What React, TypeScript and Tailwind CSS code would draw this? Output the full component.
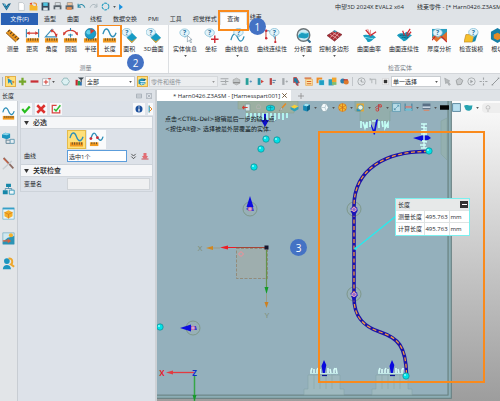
import React, { useState } from 'react';

type IconProps = { className?: string; children?: React.ReactNode };

const Icon = ({ className = 'size-[15px]', children }: IconProps) => (
  <svg viewBox="0 0 16 16" fill="none" className={`block shrink-0 ${className}`} aria-hidden="true">
    {children}
  </svg>
);

const Ruler = () => (
  <g>
    <rect x="1" y="11" width="14" height="4.5" fill="#f39a1e" />
    <path d="M3.5 11v2.5M6 11v2.5M8.500 11v2.5M11 11v2.5M13.500 11v2.5" stroke="#5a4a30" strokeWidth="1" />
  </g>
);

const Bubble = ({ x = 6, y = 4.5 }: { x?: number; y?: number }) => (
  <g>
    <path d={`M${x} ${y + 3}l0 3l3 -3z`} fill="#8cc6dc" />
    <ellipse cx={x} cy={y} rx="5" ry="4" fill="#e2f3fa" stroke="#7fbcd4" strokeWidth=".8" />
    <text x={x} y={y + 2.5} fontSize="7" fontWeight="700" textAnchor="middle" fill="#1c6f9c" fontFamily="Open Sans">?</text>
  </g>
);

const Caret = ({ className = 'text-[#555]' }: { className?: string }) => (
  <svg viewBox="0 0 4 3" className={`block h-[2px] w-[3px] shrink-0 ${className}`} aria-hidden="true">
    <path d="M0 0h4L2 3z" fill="currentColor" />
  </svg>
);

const art: Record<string, React.ReactNode> = {
  measure: (
    <g>
      <path d="M1 5l4-3.500L15.500 11l-4 4z" fill="#e8951f" />
      <path d="M1 5l10.500 10" stroke="#8a5a20" />
      <path d="M5 2l-2 2M7.500 4.200l-2 2M10 6.400l-2 2M12.400 8.600l-2 2M14.800 10.800l-2 2" stroke="#5a4020" strokeWidth="1.200" />
    </g>
  ),
  distance: (
    <g>
      <Ruler />
      <path d="M1.500 1v9M14.500 1v9" stroke="#3b8fb8" strokeWidth="1.200" />
      <path d="M2 5.500h12" stroke="#d33b33" strokeWidth="1.300" />
      <path d="M2 5.500l3-2v4zM14 5.500l-3-2v4z" fill="#d33b33" />
    </g>
  ),
  angle: (
    <g>
      <Ruler />
      <path d="M9 1L1.500 9.500H14" stroke="#3b8fb8" strokeWidth="1.200" />
      <path d="M8 2.500c3 1 4.500 3.500 5 6.500" stroke="#d33b33" strokeWidth="1.300" />
      <path d="M6.500 2l4-.5-2 3.500zM13.500 10l-2-3.500 3-.5z" fill="#d33b33" />
    </g>
  ),
  arc: (
    <g>
      <Ruler />
      <path d="M1 7C3 1 13 1 15 7" stroke="#d33b33" strokeWidth="1.300" />
      <path d="M0 8l.5-4 2.500 2zM16 8l-.5-4-2.500 2z" fill="#d33b33" />
      <path d="M8 0v3M8 6v4M5.500 7.500h5" stroke="#2f89b5" strokeWidth="1.200" />
    </g>
  ),
  radius: (
    <g>
      <Ruler />
      <circle cx="8" cy="6" r="5.700" fill="#1b9dc9" stroke="#12668a" strokeWidth=".6" />
      <circle cx="6" cy="4.500" r="2.500" fill="#63cfe8" />
      <path d="M8 6V.8L12.500 3z" fill="#d33b33" />
    </g>
  ),
  length: (
    <g>
      <Ruler />
      <path d="M1 6.500C3-.5 6-.5 8 5s5 6 7 0" stroke="#2f8fb8" strokeWidth="1.400" />
    </g>
  ),
  area: (
    <g>
      <path d="M10.500 5L16 10.500 10.500 16 5 10.500z" fill="#159bc5" />
      <path d="M5 10.500l5.500 3.500L16 10.500 10.500 16z" fill="#e3a22d" />
      <Bubble x={5} y={4.5} />
    </g>
  ),
  entity: (
    <g>
      <Bubble x={7} y={5} />
      <path d="M10 8v7l2-2 1.500 3 1-.5-1.500-3h2z" fill="#fff" stroke="#8195a5" strokeWidth=".7" />
    </g>
  ),
  coord: (
    <g>
      <Bubble x={6} y={5} />
      <path d="M11.500 8v8M7.500 12h8" stroke="#cf2832" strokeWidth="1.500" />
    </g>
  ),
  curveInfo: (
    <g>
      <path d="M1 13C3 5 6 5 8 10s5 6 7-1" stroke="#2f8fb8" strokeWidth="1.400" />
      <Bubble x={9} y={4.5} />
    </g>
  ),
  continuity: (
    <g>
      <path d="M1 3v8M11 7v8" stroke="#d3574f" strokeWidth="1.200" />
      <path d="M1 4c3-3 6 0 10 8" stroke="#3b8fb8" />
      <circle cx="1.300" cy="3" r="1.300" fill="#cf2832" />
      <circle cx="1.300" cy="11" r="1.300" fill="#cf2832" />
      <circle cx="11" cy="15" r="1.200" fill="#cf2832" />
      <Bubble x={10} y={4.5} />
    </g>
  ),
  analyse: (
    <g>
      <circle cx="8" cy="7.500" r="6.700" fill="#cdeaf3" stroke="#6c7478" strokeWidth="1.500" />
      <path d="M2.500 8c3-5 6-1 11-3v4c-4 4-7 1-11 1z" fill="#1b9dbf" />
      <path d="M4 6c3-3 5 1 8-1" stroke="#79d9e8" />
      <path d="M12.500 12.500l3 3" stroke="#2f6f94" strokeWidth="2.400" />
    </g>
  ),
  polygon: (
    <g>
      <path d="M0 8l8-5 8 4-8 7z" fill="#a82c34" />
      <path d="M3 6.500l8 5M5.500 4.500l8 5M6 12.500L13 5M3 10.500l7-6" stroke="#f0b1b1" strokeWidth=".8" />
      <path d="M0 8l8-5 8 4-8 7z" stroke="#6c1c24" strokeWidth=".6" />
      <path d="M7 3l3 1" stroke="#2b9fc1" strokeWidth="1.500" />
    </g>
  ),
  curvature: (
    <g>
      <path d="M1 8c3-2 5 1 9-2l5 4c-4 1-4 5-9 5-1-3-3-4-5-7z" fill="#1b9dbf" />
      <path d="M3 10c4 0 5 2 9 1" stroke="#7edaea" />
      <path d="M4 2l5 6 6-4" stroke="#cf2832" strokeWidth="1.500" />
      <path d="M6 1l3 7V2" stroke="#e46c68" strokeWidth=".8" />
    </g>
  ),
  surfaceCont: (
    <g>
      <path d="M0 8c4-5 7 0 10-4l6 4c-4 2-5 6-9 6-2-2-4-3-7-6z" fill="#1b9dbf" />
      <path d="M3 8c3-2 6 2 9 0M5 10c3-1 4 2 7 0" stroke="#0d5f7d" />
      <path d="M6 3l2 5M14 1l-4 6M11 9l4-5" stroke="#cf2832" strokeWidth="1.300" />
    </g>
  ),
  thickness: (
    <g>
      <rect x="0" y="1" width="16" height="10" fill="#2b9fc1" />
      <path d="M0 10l5-5 5 4 6-5v10l-6-4-5 5z" fill="#e0702c" />
      <path d="M0 13l5-6M10 9l6 6" stroke="#c12b2b" strokeWidth="1.400" />
      <Bubble x={6} y={5} />
    </g>
  ),
  draft: (
    <g>
      <path d="M2 7h9l-2 8H0z" fill="#f5c02c" stroke="#b87b14" strokeWidth=".6" />
      <path d="M11 7l4-2-3 9-3 1z" fill="#1587ae" />
      <Bubble x={10} y={4.5} />
    </g>
  ),
  undercut: (
    <g>
      <path d="M8 0l7 4v8l-7 4-7-4V4z" fill="#167fa6" />
      <path d="M8 5l4 2v4l-4 2-4-2V7z" fill="#e58b25" />
    </g>
  ),
  logo: (
    <g>
      <path d="M0 2l8 13 8-13-5 1-3 4-3-4z" fill="#1d6288" />
      <circle cx="5" cy="5" r="2" fill="#64b9d8" />
      <path d="M6 8l2 4 4-7" stroke="#35a1c8" strokeWidth="1.500" />
    </g>
  ),
  page: <path d="M3 1h7l3 3v11H3z" fill="#fff" stroke="#a8b0b8" />,
  open: (
    <g>
      <path d="M1 5h6l1 2h7v8H1z" fill="#f6b72c" />
      <path d="M8 2c4-1 6 1 5 5" stroke="#ee8c22" strokeWidth="2" />
      <path d="M1 2l5-1-2 5z" fill="#e34c26" />
    </g>
  ),
  save: (
    <g>
      <path d="M1 1h14v14H1z" fill="#35485a" />
      <path d="M4 1h8v6H4z" fill="#4fc3de" />
      <path d="M4 10h8v5H4z" fill="#dce5ea" />
    </g>
  ),
  print: (
    <g>
      <path d="M4 1h9v5H4z" fill="#d9e1e6" stroke="#777" />
      <path d="M1 6h14v7H1z" fill="#59636b" />
      <path d="M4 9h8v5H4z" fill="#d8dde0" />
    </g>
  ),
  printAll: (
    <g>
      <path d="M4 1h9v5H4z" fill="#f2c8a0" stroke="#777" />
      <path d="M1 6h14v7H1z" fill="#59636b" />
      <path d="M3 9h9v5H3z" fill="#e08a4d" />
    </g>
  ),
  undo: <path d="M2 8c4-6 10-4 12 2M2 3v6h5" stroke="#2d8daa" strokeWidth="2" />,
  redo: <path d="M14 8C10 2 4 4 2 10M14 3v6H9" stroke="#a9b6bd" strokeWidth="1.700" />,
  sync: <circle cx="8" cy="8" r="6" stroke="#2d9fc1" strokeWidth="2" strokeDasharray="5 1.300" />,
  pick: (
    <g>
      <path d="M3 2l1 10 3-3 3 5 2-1-3-5h4z" fill="#1f8fc4" />
      <path d="M11 9h4M13 7v4M2 1h4" stroke="#e07b1e" strokeWidth="1.500" />
    </g>
  ),
  plus: <path d="M8 1.500v13M1.500 8h13" stroke="#75a72b" strokeWidth="4" />,
  minus: <path d="M1 8h14" stroke="#c92f35" strokeWidth="4" />,
  boxPlus: (
    <g>
      <path d="M1 3h12v12H1z" fill="#fff" stroke="#8c9aa4" />
      <path d="M7 5v8M3 9h8M11 3h5" stroke="#d33b33" strokeWidth="1.800" />
    </g>
  ),
  hexagon: <path d="M5 2h6l4 6-4 6H5L1 8z" fill="#dcf0f2" stroke="#7bacae" strokeWidth="1.300" />,
  filter: (
    <g>
      <path d="M1 5h4v10H1z" fill="#c8282e" />
      <path d="M5 7h4v8H5z" fill="#2c9c52" />
      <path d="M9 9h3v6H9z" fill="#2468a8" />
      <path d="M5 1h11l-4 4v4h-2V5z" fill="#38444c" />
    </g>
  ),
  swap: (
    <g>
      <path d="M1 5l6-3 6 3v7l-6 3-6-3z" fill="#1c91b9" />
      <path d="M4 8h10l-3-5M12 11H5l3 4" stroke="#fff" strokeWidth="1.500" />
      <path d="M10 2l5 3-5 2z" fill="#24597c" />
    </g>
  ),
  greyLines: <path d="M1 3h14M1 8h14M3 13h9M10 5v6" stroke="#a4a8aa" strokeWidth="1.800" />,
  greyCube: (
    <g>
      <path d="M2 5l6-3 6 3v6l-6 3-6-3z" fill="#c3c7c9" stroke="#999" />
      <path d="M2 10h12" stroke="#888" strokeWidth="2" />
    </g>
  ),
  barTeal: (
    <g>
      <path d="M3 2h5v12H3z" fill="#28a09a" />
      <path d="M10 8h4M12 6v4" stroke="#5390bb" strokeWidth="1.500" />
    </g>
  ),
  barRed: (
    <g>
      <path d="M3 2h5v12H3z" fill="#2c97ab" />
      <path d="M9 5l5 3-5 3z" fill="#d3403a" />
    </g>
  ),
  barRed2: (
    <g>
      <path d="M3 2h4v12H3z" fill="#b94545" />
      <path d="M8 6h6M8 10h4" stroke="#4f7ba0" strokeWidth="1.700" />
    </g>
  ),
  barGrey: (
    <g>
      <path d="M4 2h4v12H4z" fill="#a4a9ac" />
      <path d="M10 8h4M12 6v4" stroke="#a4a9ac" strokeWidth="1.500" />
    </g>
  ),
  cursor: <path d="M3 1h5l5 9-3 1 1 4-3-1-2-5-3 1z" fill="#1b7ea6" stroke="#cf3b37" strokeWidth="1.500" />,
  list: (
    <g>
      <path d="M3 4h12v11H3z" fill="#fbe5a6" stroke="#ea9a34" />
      <path d="M1 2h12M5 8h8M5 12h8" stroke="#d8672d" strokeWidth="2" />
    </g>
  ),
  layers: (
    <g>
      <path d="M1 1h10v10H1z" fill="#ee8d27" />
      <path d="M5 5h10v10H5z" fill="#1f9fc4" stroke="#fff" />
    </g>
  ),
  cubes: (
    <g>
      <path d="M1 4h9v11H1z" fill="#2a9dbb" />
      <path d="M7 1h8v8H7z" fill="#f0a62e" />
      <path d="M7 9h8v5H7z" fill="#83bd6d" />
    </g>
  ),
  balls: (
    <g>
      <circle cx="5" cy="7" r="4.500" fill="#2a7fae" />
      <circle cx="11" cy="9" r="4.500" fill="#de7a2c" />
      <path d="M6 5h8" stroke="#c23333" strokeWidth="2" />
    </g>
  ),
  clock: (
    <g>
      <circle cx="8" cy="8" r="6.500" stroke="#9b9fa2" strokeWidth="1.300" />
      <path d="M8 4v5h4M8 8L5 6" stroke="#9b9fa2" strokeWidth="1.300" />
    </g>
  ),
  hook: <path d="M2 4h10v9M5 4v7M2 2v4" stroke="#a9adb0" strokeWidth="1.500" />,
  square: (
    <g>
      <path d="M1 1h14v14H1z" fill="#fff" stroke="#bbb" />
      <path d="M4 4h8v8H4z" fill="#333" />
    </g>
  ),
  greyCursor: <path d="M3 2l2 10 2-3 4 6 2-2-4-5 3-1z" fill="#b5b9bb" stroke="#96999b" />,
  greyShape: <path d="M2 6l6-4 6 4-3 7-7 1z" fill="#c8cbcd" stroke="#989b9d" strokeWidth="1.500" />,
  play: (
    <g>
      <circle cx="8" cy="8" r="6.500" stroke="#9b9fa2" strokeWidth="1.300" />
      <path d="M6 5l5 3-5 3z" fill="#9b9fa2" />
    </g>
  ),
  dots: <path d="M1 8h4M8 1v4M8 11v4M11 8h4M7 8h2" stroke="#a0a4a6" strokeWidth="2" />,
  line: <path d="M2 14L14 2M1 14h3M12 2h3" stroke="#85898c" strokeWidth="1.500" />,
  wireTree: (
    <g>
      <path d="M0 3l4-2 6 1v5l-4 2-6-2z" fill="#1c95bf" />
      <path d="M0 3l4-2 6 1-4 2z" fill="#8ad6ea" />
      <path d="M5 9v5h5M5 10h5" stroke="#688797" strokeWidth="1.200" />
      <path d="M10 9h5v5h-5z" fill="#e6eff3" stroke="#4f8ca8" />
    </g>
  ),
  tools: (
    <g>
      <path d="M2 1l12 13" stroke="#8b6b62" strokeWidth="2.200" />
      <path d="M1 15L12 5" stroke="#c6cdd2" strokeWidth="1.800" />
      <path d="M2 2l6 6" stroke="#d3603f" strokeWidth="1.300" />
    </g>
  ),
  orgTree: (
    <g>
      <path d="M5 2h6v4H5zM1 10h6v5H1z" fill="#1587a9" />
      <path d="M9 10h6v5H9z" fill="#eef7fa" stroke="#1f8fb3" />
      <path d="M8 6v2M4 10V8h8v2" stroke="#4f8ca8" />
    </g>
  ),
  box: (
    <g>
      <path d="M1 1h14v14H1z" fill="#eaf5f9" stroke="#7cb8cf" />
      <path d="M1 1h14v2H1z" fill="#36a0c8" />
      <path d="M8 4l5 2.500v5L8 14l-5-2.500v-5z" fill="#f4b02b" />
      <path d="M3 6.500L8 9l5-2.500M8 9v5" stroke="#d77e1b" />
    </g>
  ),
  scenery: (
    <g>
      <path d="M1 1h14v14H1z" fill="#cfe8f0" stroke="#83b4c6" />
      <path d="M1 12l6-5 8-2v10H1z" fill="#2b94b5" />
      <circle cx="11" cy="4" r="2.500" fill="#f4b02b" />
      <path d="M1 11h8M7 9l3 2-3 2" stroke="#e0603a" strokeWidth="1.500" />
    </g>
  ),
  people: (
    <g>
      <circle cx="6" cy="5" r="3.500" fill="#1c95bf" />
      <path d="M1 15c0-7 10-7 10 0z" fill="#1c95bf" />
      <path d="M8 2c6-1 5 6 3 7l4 3" stroke="#eea72c" strokeWidth="2.400" />
    </g>
  ),
  exit: (
    <g>
      <path d="M6 2h8v12H6z" fill="#dae8ea" stroke="#6b8d96" />
      <path d="M1 8h9M4 5L1 8l3 3" stroke="#d33b33" strokeWidth="2" />
    </g>
  ),
  gem: (
    <g>
      <ellipse cx="8" cy="9" rx="7.500" ry="5" fill="#10d3dc" stroke="#13858f" strokeWidth="1.200" />
      <path d="M4 8h8M8 5v8" stroke="#13858f" />
    </g>
  ),
  brush: (
    <g>
      <path d="M14 1L7 9" stroke="#e58b25" strokeWidth="3" />
      <path d="M7 8l-5 6 6-3z" fill="#fff" stroke="#777" />
    </g>
  ),
  slab: (
    <g>
      <path d="M1 7l7-4 7 3-7 4z" fill="#f6cf3a" />
      <path d="M1 7l7 3v5l-7-4zM15 6v5l-7 4v-5z" fill="#2fa0b9" />
    </g>
  ),
  cube: (
    <g>
      <path d="M2 4l5-3 7 2v8l-5 4-7-2z" fill="#1589b5" />
      <path d="M2 4l5-3 7 2-5 3z" fill="#a7e4f1" />
      <path d="M9 6l5-3v8l-5 4z" fill="#0d5f84" />
    </g>
  ),
  ghostCube: (
    <g>
      <path d="M5 1h6l4 7-4 7H5L1 8z" fill="#f4fafc" stroke="#7d98a3" />
      <path d="M1 8h8l2-7M9 8l2 7" stroke="#9db4bd" />
    </g>
  ),
  globe: (
    <g>
      <circle cx="8" cy="8" r="7" fill="#f6bd31" stroke="#cf6c1c" />
      <path d="M8 1v14M2 4l12 8M14 4L2 12" stroke="#cf6c1c" strokeWidth="1.400" />
    </g>
  ),
  magnify: (
    <g>
      <path d="M1 1h13v14H1z" fill="#e9a92f" />
      <path d="M1 10h7v5H1z" fill="#2f93b8" />
      <circle cx="8" cy="8" r="4.500" fill="#f3f3dc" stroke="#2f93b8" strokeWidth="1.200" />
    </g>
  ),
  rotate: (
    <g>
      <path d="M2 9c3-5 9-5 12-2M8 2v12" stroke="#a84c55" strokeWidth="1.700" />
      <circle cx="6" cy="12" r="2.500" stroke="#d33b33" strokeWidth="1.500" />
      <circle cx="11" cy="5" r="2.500" stroke="#d33b33" strokeWidth="1.500" />
    </g>
  ),
  fit: <path d="M1 1h14v14H1zM4 12l8-8M9 4h3v3M4 9v3h3" fill="#b8dce8" stroke="#3f87a4" />,
  section: (
    <g>
      <path d="M2 1v13M14 1v13" stroke="#2c7797" strokeWidth="1.500" />
      <path d="M2 7h12" stroke="#e66d61" strokeWidth="2" />
      <path d="M2 12h12" stroke="#67c0d6" strokeWidth="3" />
    </g>
  ),
  monitor: (
    <g>
      <path d="M1 1h14v10H1z" fill="#596f85" />
      <path d="M1 6h14v3H1z" fill="#c9d5e2" />
      <path d="M3 12h10v2H3z" fill="#d98a6a" />
    </g>
  ),
  blackBar: <path d="M0 4h16v8H0z" fill="#060606" />,
  pane: <path d="M1 1h14v14H1z" fill="#b7dff0" stroke="#4b7c94" strokeWidth="1.500" />,
  surface: <path d="M0 5c5-4 8 1 15-1l-1 6c-3 5-8 4-11 2z" fill="#26a3b0" />,
  bulb: <path d="M5 10c-4-9 10-9 6 0zM6 14h4" stroke="#b4b4b4" strokeWidth="1.500" />,
};

const quickAccess = ['logo', 'page', 'open', 'save', 'print', 'printAll', 'undo', 'redo', 'sync'];
const tabs = ['造型', '曲面', '线框', '数据交换', 'PMI', '工具', '视觉样式'];
const measureTools = [
  ['测量', 'measure'],
  ['距离', 'distance'],
  ['角度', 'angle'],
  ['圆弧', 'arc'],
  ['半径', 'radius'],
  ['长度', 'length'],
  ['面积', 'area'],
];
const inspectTools = [
  { label: '实体信息', icon: 'entity', menu: true, pad: 'px-1' },
  { label: '坐标', icon: 'coord', menu: false, pad: 'px-1' },
  { label: '曲线信息', icon: 'curveInfo', menu: true, pad: 'px-1' },
  { label: '曲线连续性', icon: 'continuity', menu: false, pad: 'px-1' },
  { label: '分析面', icon: 'analyse', menu: true, pad: 'pl-[3px] pr-1' },
  { label: '控制多边形', icon: 'polygon', menu: true, pad: 'pl-[3px] pr-1' },
  { label: '曲面曲率', icon: 'curvature', menu: false, pad: 'px-1' },
  { label: '曲面连续性', icon: 'surfaceCont', menu: false, pad: 'px-1' },
  { label: '厚度分析', icon: 'thickness', menu: false, pad: 'px-1' },
  { label: '检查拔模', icon: 'draft', menu: false, pad: 'px-1' },
  { label: '根切', icon: 'undercut', menu: false, pad: 'px-1' },
];
const filterTools = ['greyLines', 'greyCube', 'barTeal', 'barRed', 'barRed2', 'barGrey', 'cursor', 'list', 'layers', 'cubes', 'balls'];
const sideTabs = ['length', 'wireTree', 'tools', 'orgTree', 'box', 'scenery', 'people'];
const viewTools = [
  ['exit', ''], ['bulb', ''], ['gem', ''], ['brush', ''], ['slab', ''], ['cube', 'menu'], ['ghostCube', 'menu'],
  ['globe', 'menu'], ['magnify', 'menu'], ['rotate', 'menu'], ['fit', ''], ['section', 'menu'],
  ['monitor', 'menu'], ['blackBar', ''], ['pane', ''], ['surface', 'menu'],
];

const Step = ({ n, className }: { n: number; className: string }) => (
  <span className={`absolute z-20 flex size-[17px] items-center justify-center rounded-full bg-[#4472c4] text-[10px] leading-none text-white ${className}`}>
    {n}
  </span>
);

const IconButton = ({ name, size = 'size-[9px]' }: { name: string; size?: string }) => (
  <button type="button" aria-label={name} className="flex w-3 shrink-0 items-center justify-center">
    <Icon className={size}>{art[name]}</Icon>
  </button>
);

const Ball = ({ x, y }: { x: number; y: number }) => (
  <g>
    <circle cx={x} cy={y} r="3.200" fill="#00e2e8" stroke="#14898f" strokeWidth=".7" />
    <circle cx={x - 1} cy={y - 1} r="1" fill="#8bffff" />
  </g>
);

const Node = ({ x, y }: { x: number; y: number }) => (
  <g>
    <circle cx={x} cy={y} r="7" fill="#a5b3a5" fillOpacity=".2" stroke="#77907f" strokeWidth=".8" />
    <path d={`M${x - 4} ${y}l2-2h5l1 4h-5z`} fill="#3d3fd0" />
    <circle cx={x} cy={y} r="1.800" fill="#c9a8dd" stroke="#e07a9a" strokeWidth=".9" />
  </g>
);

const Socket = ({ x }: { x: number }) => (
  <g>
    <path d={`M${x - 1} 375h32v14h4v6h-40v-6h4z`} fill="#a9c1c2" fillOpacity=".5" stroke="#83a3a5" strokeWidth=".5" />
    <path d={`M${x + 5} 375v14M${x + 11} 375v14M${x + 17} 375v14M${x + 23} 375v14`} stroke="#84a1a3" strokeWidth=".5" />
    <path
      d={`M${x + 2} 374v-3l1-3M${x + 5} 374v-5M${x + 8} 374v-4l1-2M${x + 11} 374v-5M${x + 19} 374v-6M${x + 22} 374l-1-5M${x + 25} 374v-4l1-2M${x + 28} 374l-1-6`}
      stroke="#d6fbf7"
      strokeWidth="1.600"
      fill="none"
    />
    <path d={`M${x + 1} 373.500h28`} stroke="#c2e9e8" strokeWidth="1" />
    <path d={`M${x + 15} 360l2.300 5-1.500 8h-2l-1.300-7z`} fill="#0808dd" />
    <path d={`M${x + 13} 375.500h5`} stroke="#0b1590" strokeWidth="1.200" />
  </g>
);

const cable = 'M428 151.500C386 151 354 169 354 206V298C354 318 365 327 380 332C398 338 406 346 406.500 375';

const Scene = () => (
  <svg viewBox="157 101 343 300" preserveAspectRatio="xMinYMin slice" className="absolute inset-0 size-full" aria-hidden="true">
    <path d="M157 101H451V398H157z" fill="#94b0bc" />
    <path d="M447.500 101H451.500V398.500H157V395H447.500z" fill="#809d9f" />
    <path d="M448 101V395H157M451.500 101V398.500H157" fill="none" stroke="#667e80" strokeWidth=".8" />
    <path d="M449.800 101V396.800H157" fill="none" stroke="#91b4c0" strokeWidth="1" />

    <path d="M238 101h60v8h-4v4h-48v-4h-8z" fill="#9cb0a2" stroke="#8aa494" strokeWidth=".6" />
    <path d="M247 113v6M251 113v8M255 113v6M259 113v7M263 113v8M267 113v8M271 113v6M275 113v8M279 113v6M283 113v7M287 113v5" stroke="#b9fff8" strokeWidth="1.700" />
    <path d="M264 114h2v6h3l-4 7-4-7h3z" fill="#0d0dcb" />
    <path d="M355 101h37v10h-2v10h-30v-10h-5z" fill="#93aeac" stroke="#7f9e96" strokeWidth=".5" />
    <path
      d="M361 121v7M363 122l2 6 2-6v6M370 121v6M372 121h4M379 121v7M382 121l1 6M385 121v7l3-5v5"
      stroke="#c3fff5"
      strokeWidth="1.700"
      fill="none"
    />
    <path d="M371 124l3 6 2-10 2-1-3 15-1 1-3-9z" fill="#0d0dd8" />
    <path d="M441 121l6-3v42l-6-6z" fill="#94b0b0" stroke="#82a09c" strokeWidth=".5" />
    <path
      d="M421 124h6M421 127l6 1M421 131l6-1M421 134h6M422 141l5 1M420 145h6M421 148h6"
      stroke="#c9fff8"
      strokeWidth="1.600"
      fill="none"
    />
    <path d="M413 138l9-2.500h6l3 2.500-3 2h-6v1z" fill="#0d0dd8" />
    <path d="M424 124v24" stroke="#d5fffb" strokeWidth="1.300" />
    <Socket x={309} />
    <Socket x={377} />

    <Ball x={266} y={139} />
    <Ball x={277} y={140} />
    <Ball x={261} y={149} />
    <Ball x={254} y={167} />
    <Ball x={160} y={327} />
    <Node x={250} y={209} />
    <path d="M250 196l3.500 11h-7z" fill="#0d0de0" />
    <Node x={193} y={328} />
    <path d="M180 328l11-3.500v7z" fill="#0d0de0" />

    <path d="M236.500 248.500h31v30h-31z" fill="#a5ada5" fillOpacity=".6" stroke="#917d62" strokeWidth=".7" strokeDasharray="3 1.500" />
    <path d="M212 248h8" stroke="#9b9b86" />
    <path d="M206 248l7-2v4z" fill="#d2871f" />
    <path d="M230 247.500h37" stroke="#a54436" />
    <path d="M220 247.500l8-2v4z" fill="#ee1c24" />
    <path d="M226 247.500h10" stroke="#ee1c24" />
    <path d="M266.500 250v38" stroke="#64934c" strokeWidth="1.200" />
    <path d="M264.500 287h4l-2 7z" fill="#149c28" />
    <path d="M266.500 294v9" stroke="#9b9b86" />
    <path d="M264.500 302h4l-2 6z" fill="#cd8020" />
    <path d="M264.500 245.500h4v4h-4z" fill="#15152d" />
    <path d="M241 251.500l2.500 2.500-2.500 2.500-2.500-2.500z" fill="none" stroke="#fa8c96" />
    <g fontFamily="Open Sans" fontSize="8" textAnchor="middle" fill="#7d8b72">
      <text x="200" y="251">X</text>
      <text x="267" y="318">Y</text>
    </g>
    <path d="M172 372.500h22" stroke="#e23b40" strokeWidth="1.300" />
    <path d="M166 372.500l7-2v4z" fill="#e23b40" />
    <path d="M194.500 375v26" stroke="#35a647" strokeWidth="1.500" />
    <path d="M192.500 395h4l-2 6z" fill="#17992c" />
    <g fontFamily="Open Sans" fontSize="8" fontWeight="700" textAnchor="middle">
      <text x="162" y="376" fill="#e2262f">X</text>
      <text x="194.500" y="376" fill="#102cc9">Z</text>
    </g>

    <Node x={354} y={209} />
    <Node x={354} y={294} />
    <path d={cable} fill="none" stroke="#1d13a8" strokeWidth="3.600" />
    <path d={cable} fill="none" stroke="#f39a3c" strokeWidth="1.300" strokeDasharray="4 2.500" />
    <path d="M350.500 211h7l-3.500 6z" fill="#1a14b8" />
    <path d="M351 296h6l-3 6z" fill="#1a14b8" />
    <circle cx="354" cy="209.500" r="2" fill="#8c6bd0" stroke="#f0a3bc" />
    <circle cx="354" cy="294.500" r="2" fill="#8c6bd0" stroke="#f0a3bc" />
    <Ball x={429} y={151} />
    <Ball x={406} y={376} />
    <path d="M396 216L355 249" stroke="#22eef0" strokeWidth="1.200" />
    <circle cx="355.500" cy="248.500" r="1.300" fill="#22eef0" />
  </svg>
);

const Ribbon = () => (
  <section className="flex h-[49px] overflow-hidden border-b border-[#d3d6da] bg-[#fdfdfd]">
    <div className="box-content flex w-[165px] shrink-0 flex-col border-r border-[#dcdfe2] pl-[3px]">
      <div className="flex h-[37px]">
        <div className="grid w-[136px] grid-cols-7">
          {measureTools.map(([label, icon]) => (
            <button key={label} type="button" className="relative flex flex-col items-center gap-[2px] pt-[3px] whitespace-nowrap">
              <Icon>{art[icon]}</Icon>
              <span className="leading-[8px]">{label}</span>
              {label === '长度' && <span className="absolute -top-[1px] -left-[3px] z-10 h-[33px] w-[25px] border-2 border-[#f98a1c]" />}
            </button>
          ))}
        </div>
        <button type="button" className="flex flex-1 flex-col items-center gap-[2px] pt-[3px] whitespace-nowrap">
          <Icon>{art.area}</Icon>
          <span className="leading-[8px]">3D曲面</span>
        </button>
      </div>
      <p className="pt-[2px] text-center leading-[8px] text-[#777f88]">测量</p>
    </div>
    <div className="flex w-[462px] shrink-0 flex-col">
      <div className="flex h-[37px] items-start">
        {inspectTools.map((tool) => (
          <button key={tool.label} type="button" className={`flex shrink-0 flex-col items-center gap-[2px] pt-[3px] whitespace-nowrap ${tool.pad}`}>
            <Icon className="-mx-[2px] size-[15px]">{art[tool.icon]}</Icon>
            <span className="leading-[8px]">{tool.label}</span>
            {tool.menu && <Caret />}
          </button>
        ))}
      </div>
      <p className="pt-[2px] text-center leading-[8px] text-[#777f88]">检查实体</p>
    </div>
  </section>
);

const Toolbar = () => (
  <div className="flex h-4 items-center overflow-hidden border-b border-[#d4d8dc] bg-[#e4e7ea]">
    <span className="mr-[2px] ml-[2px] h-[9px] w-px shrink-0 bg-[#a9b5c2]" />
    <button type="button" aria-label="pick" className="flex size-[11px] shrink-0 items-center justify-center border border-[#e2b04a] bg-[#ffe07a]">
      <Icon className="size-[9px]">{art.pick}</Icon>
    </button>
    <div className="flex w-[69px] shrink-0 items-center">
      <IconButton name="plus" />
      <IconButton name="minus" />
      <IconButton name="boxPlus" />
      <Caret />
      <span className="w-1" />
      <IconButton name="hexagon" />
      <span className="flex-1" />
      <IconButton name="filter" />
    </div>
    <label className="relative flex shrink-0 items-center">
      <select aria-label="过滤" defaultValue="全部" className="h-[11px] w-[50px] appearance-none border border-[#c9cdd1] bg-white pl-[1px]">
        <option>全部</option>
      </select>
      <span className="absolute right-[3px]"><Caret /></span>
    </label>
    <button type="button" aria-label="swap" className="ml-[2px] flex size-[11px] shrink-0 items-center justify-center border border-[#e2b04a] bg-[#ffe07a]">
      <Icon className="size-[9px]">{art.swap}</Icon>
    </button>
    <label className="relative ml-[1px] flex shrink-0 items-center">
      <select aria-label="范围" defaultValue="零件和组件" className="h-[11px] w-[69px] appearance-none border border-[#d6d9dc] bg-[#eceef0] pl-[1px] text-[#8d9196]">
        <option>零件和组件</option>
      </select>
      <span className="absolute right-[3px]"><Caret className="text-[#999]" /></span>
    </label>
    <div className="flex shrink-0">
      {filterTools.map((name) => <IconButton key={name} name={name} />)}
    </div>
    <span className="mx-[2px] h-[9px] w-px shrink-0 bg-[#c2c6ca]" />
    <IconButton name="clock" />
    <IconButton name="hook" />
    <IconButton name="square" size="size-[7px]" />
    <label className="relative flex shrink-0 items-center">
      <select aria-label="选择方式" defaultValue="单一选择" className="h-[11px] w-[50px] appearance-none border border-[#c9cdd1] bg-white pl-[1px]">
        <option>单一选择</option>
      </select>
      <span className="absolute right-[3px]"><Caret /></span>
    </label>
    {['greyCursor', 'greyShape', 'play', 'dots', 'line'].map((name) => <IconButton key={name} name={name} />)}
  </div>
);

const SectionTitle = ({ children }: { children: React.ReactNode }) => (
  <h3 className="flex h-3 items-center gap-1 border-b border-[#d3d8de] bg-[#f5f6f8] pl-[3px] text-[7px] font-medium text-[#222]">
    <svg viewBox="0 0 6 5" className="h-1 w-[5px]" aria-hidden="true"><path d="M0 0h6L3 5z" fill="#333" /></svg>
    {children}
  </h3>
);

const LengthPanel = () => {
  const [curve, setCurve] = useState('选中1个');
  const [variable, setVariable] = useState('');

  return (
    <div className="flex flex-1 flex-col border-l border-[#c8cdd3] bg-[#dde2e9] px-[2px]">
      <div className="flex h-[15px] items-center gap-[3px]">
        <button type="button" aria-label="确定" className="flex size-3 items-center justify-center bg-[#f7f8fa]">
          <Icon className="size-[10px]"><path d="M2 8l4 5 8-9" stroke="#27bd1d" strokeWidth="3.500" /></Icon>
        </button>
        <button type="button" aria-label="取消" className="flex size-3 items-center justify-center bg-[#f7f8fa]">
          <Icon className="size-[10px]"><path d="M2 2l12 12M14 2L2 14" stroke="#dc302d" strokeWidth="4" /></Icon>
        </button>
        <button type="button" aria-label="应用" className="flex size-3 items-center justify-center bg-[#f7f8fa]">
          <Icon className="size-[10px]">
            <path d="M9 2H2v12h12V9" stroke="#d84340" strokeWidth="2" />
            <path d="M5 8l3 3 7-9" stroke="#2dbd32" strokeWidth="2.500" />
          </Icon>
        </button>
        <span className="flex-1" />
        <button type="button" aria-label="信息" className="flex size-3 items-center justify-center bg-[#f7f8fa]">
          <Icon className="size-2">
            <circle cx="8" cy="8" r="7" fill="#1b4f9c" />
            <path d="M8 7v6M8 3v2" stroke="#fff" strokeWidth="2.500" />
          </Icon>
        </button>
        <button type="button" aria-label="下一步" className="flex h-3 w-[5px] items-center overflow-hidden bg-[#f7f8fa]">
          <Icon className="size-2"><path d="M1 1h3v14H1z" fill="#56aec8" /><path d="M3 3l5 5-5 5" stroke="#e98b25" strokeWidth="2" /></Icon>
        </button>
      </div>
      <section className="border border-[#cdd3da]">
        <SectionTitle>必选</SectionTitle>
        <div className="flex flex-col pt-[1px] pb-[2px] pl-[3px]">
          <div className="flex h-[19px] gap-[1px] pl-[43px]">
            <button type="button" aria-label="曲线长度" aria-pressed="true" className="flex w-[19px] items-center justify-center border border-[#e4bb4b] bg-[#ffe07a]">
              <Icon>{art.length}</Icon>
            </button>
            <button type="button" aria-label="两点间长度" className="flex w-[19px] items-center justify-center bg-[#fafbfc]">
              <Icon>
                <path d="M1 11h9v4H1z" fill="#f39a1e" />
                <path d="M3 11v2M5.500 11v2M8 11v2" stroke="#5a4a30" />
                <path d="M2 7C4 0 6 0 8 4s5 8 7 1" stroke="#2f8fb8" strokeWidth="1.400" />
                <circle cx="2" cy="7" r="1.500" fill="#cf2832" />
                <circle cx="9" cy="6" r="1.500" fill="#cf2832" />
              </Icon>
            </button>
          </div>
          <div className="mt-[1px] flex items-center">
            <label htmlFor="curve" className="w-[43px]">曲线</label>
            <input
              id="curve"
              className="h-3 w-[60px] border border-[#5c9ddb] bg-white px-[1px] outline-none"
              value={curve}
              onChange={(e) => setCurve(e.target.value)}
            />
            <button type="button" aria-label="展开" className="ml-[2px] flex w-[9px] justify-center">
              <Icon className="size-[7px]"><path d="M3 2l5 5 5-5M3 8l5 5 5-5" stroke="#333" strokeWidth="1.800" /></Icon>
            </button>
            <button type="button" aria-label="清除" className="ml-[3px]">
              <Icon className="size-[8px]">
                <path d="M5 2h6v6h3l-3 5H5L2 8h3z" fill="#e26d74" />
                <path d="M1 14h14" stroke="#c94a52" strokeWidth="2" />
              </Icon>
            </button>
          </div>
        </div>
      </section>
      <section className="border border-t-0 border-[#cdd3da]">
        <SectionTitle>关联检查</SectionTitle>
        <div className="flex items-center py-[1px] pl-[3px]">
          <label htmlFor="variable" className="w-[43px]">变量名</label>
          <input
            id="variable"
            className="h-3 w-[83px] border border-[#d0d4d8] bg-[#eff0f1] px-[1px] outline-none"
            value={variable}
            onChange={(e) => setVariable(e.target.value)}
          />
        </div>
      </section>
    </div>
  );
};

const Viewport = () => (
  <main className="relative flex-1 overflow-hidden bg-linear-to-b from-[#fbfbfb] via-[#cbcbcb] to-[#9d9d9d]">
    <Scene />
    <p className="absolute top-[13px] left-2 whitespace-nowrap font-['DejaVu_Sans','Noto_Sans_CJK_SC',sans-serif] text-[6px] leading-[10px] text-[#101820]">
      点击&lt;CTRL-Del&gt;撤销最后一步的输入点.<br />
      &lt;按住Alt键&gt; 选择被最外层覆盖的实体.
    </p>
    <div className="absolute top-[1px] right-0 left-[83px] flex h-[11px] items-center">
      {viewTools.map(([name, menu]) => (
        <div key={name} className="flex shrink-0 items-center">
          <IconButton name={name} />
          {menu && <span className="flex w-[6px] justify-center"><Caret /></span>}
        </div>
      ))}
      <span className="ml-[2px] flex h-[10px] flex-1 items-center overflow-hidden rounded-l bg-[#eeeeee]">
        <IconButton name="bulb" size="size-[8px]" />
      </span>
    </div>
    <div className="absolute top-[30px] left-[161px] h-[252px] w-[167px] border-2 border-[#f98a1c]" />
    <Step n={3} className="top-[138px] left-[133px]" />
    <div className="absolute top-[97px] left-[238px] border border-[#7cf0ef] bg-white font-['Open_Sans','Noto_Sans_CJK_SC',sans-serif]">
      <div className="flex h-[11px] items-center justify-between bg-[#e7e9e9] pr-[1px] pl-[2px]">
        <span>长度</span>
        <button type="button" aria-label="折叠" className="flex h-[7px] w-2 items-center justify-center bg-[#333]">
          <span className="h-px w-[5px] bg-white" />
        </button>
      </div>
      <table className="border-collapse whitespace-nowrap">
        <tbody>
          {['测量长度', '计算长度'].map((name) => (
            <tr key={name} className="h-3 border-t border-[#dfe3e3]">
              <th scope="row" className="w-[28px] border-r border-[#dfe3e3] p-0 pl-[2px] text-left font-normal">{name}</th>
              <td className="w-[25px] border-r border-[#dfe3e3] p-0 text-center">495.763</td>
              <td className="w-5 p-0 pl-[1px]">mm</td>
            </tr>
          ))}
        </tbody>
      </table>
    </div>
  </main>
);

const App = () => {
  return (
    <div className="flex min-h-screen flex-col overflow-hidden bg-[#e2e5e8] font-['Open_Sans','Noto_Sans_CJK_SC',sans-serif] text-[6px] leading-[8px] text-[#25292e]">
      <header className="flex h-[13px] shrink-0 items-center overflow-hidden bg-[#dfe3e7] whitespace-nowrap">
        <nav className="flex items-center">
          {quickAccess.map((name, i) => (
            <React.Fragment key={name}>
              <IconButton name={name} />
              {i === 0 && <span className="w-[3px]" />}
            </React.Fragment>
          ))}
          <button type="button" aria-label="更多" className="flex w-[6px] justify-center"><Caret /></button>
          <button type="button" aria-label="展开工具栏" className="flex w-2 justify-center">
            <Icon className="size-[6px]"><path d="M3 0v16l10-8z" fill="#1790e0" /></Icon>
          </button>
        </nav>
        <h1 className="flex gap-[13px] pl-[210px]">
          <span>中望3D 2024X EVAL2 x64</span>
          <span>线束零件 - [* Harn0426.Z3ASM</span>
        </h1>
      </header>

      <nav className="relative flex h-3 shrink-0 items-stretch bg-[#dfe3e7]">
        <button type="button" className="ml-[1px] w-[37px] bg-[#2a61b4] text-white">文件(F)</button>
        <div className="flex gap-[11px] pl-[6px]">
          {tabs.map((tab) => <button key={tab} type="button" className="whitespace-nowrap">{tab}</button>)}
        </div>
        <button type="button" className="relative ml-1 w-[25px] bg-[#fdfdfd]">
          查询
          <span className="absolute -top-[3px] -left-[3px] z-10 h-[21px] w-[31px] border-2 border-[#f98a1c]" />
        </button>
        <div className="relative flex w-6 items-start">
          <button type="button" className="pl-1">线束</button>
          <Step n={1} className="top-[5px] left-[3px]" />
        </div>
      </nav>

      <div className="relative shrink-0">
        <Ribbon />
        <Step n={2} className="top-[29px] left-[127px]" />
      </div>
      <Toolbar />

      <div className="flex flex-1">
        <aside className="flex w-[155px] shrink-0 flex-col">
          <div className="flex h-[11px] items-center bg-[#dfe3e8] pr-[3px] pl-[2px]">
            <h2 className="flex-1">长度</h2>
            <button type="button" aria-label="停靠" className="mr-1">
              <Icon className="size-[6px]"><path d="M1 3h14v10H1zM1 8h14" stroke="#9aa3ab" strokeWidth="2" /></Icon>
            </button>
            <button type="button" aria-label="关闭">
              <Icon className="size-[6px]"><path d="M1 1h14v14H1zM4 4l8 8M12 4l-8 8" stroke="#9aa3ab" strokeWidth="1.800" /></Icon>
            </button>
          </div>
          <div className="flex flex-1">
            <nav className="flex w-[17px] flex-col">
              {sideTabs.map((name, i) => (
                <button key={name} type="button" aria-label={name} className={`flex h-[25px] items-center justify-center ${i === 0 ? 'bg-[#fbfcfd]' : ''}`}>
                  <Icon className="size-[13px]">{art[name]}</Icon>
                </button>
              ))}
            </nav>
            <LengthPanel />
          </div>
        </aside>
        <div className="flex min-w-0 flex-1 flex-col border-l-2 border-[#cdd1d5]">
          <div className="flex h-[11px] items-center bg-[#dfe3e7]">
            <div className="flex h-full w-[134px] items-center justify-between bg-white pr-1 pl-4 whitespace-nowrap">
              <span>* Harn0426.Z3ASM - [Harnesspart001]</span>
              <button type="button" aria-label="关闭标签">
                <Icon className="size-[5px]"><path d="M1 1l14 14M15 1L1 15" stroke="#6d5638" strokeWidth="3" /></Icon>
              </button>
            </div>
            <button type="button" aria-label="新建标签" className="ml-[7px]">
              <Icon className="size-[6px]"><path d="M8 0v16M0 8h16" stroke="#888" strokeWidth="2" /></Icon>
            </button>
          </div>
          <Viewport />
        </div>
      </div>
    </div>
  );
};

export default App;
